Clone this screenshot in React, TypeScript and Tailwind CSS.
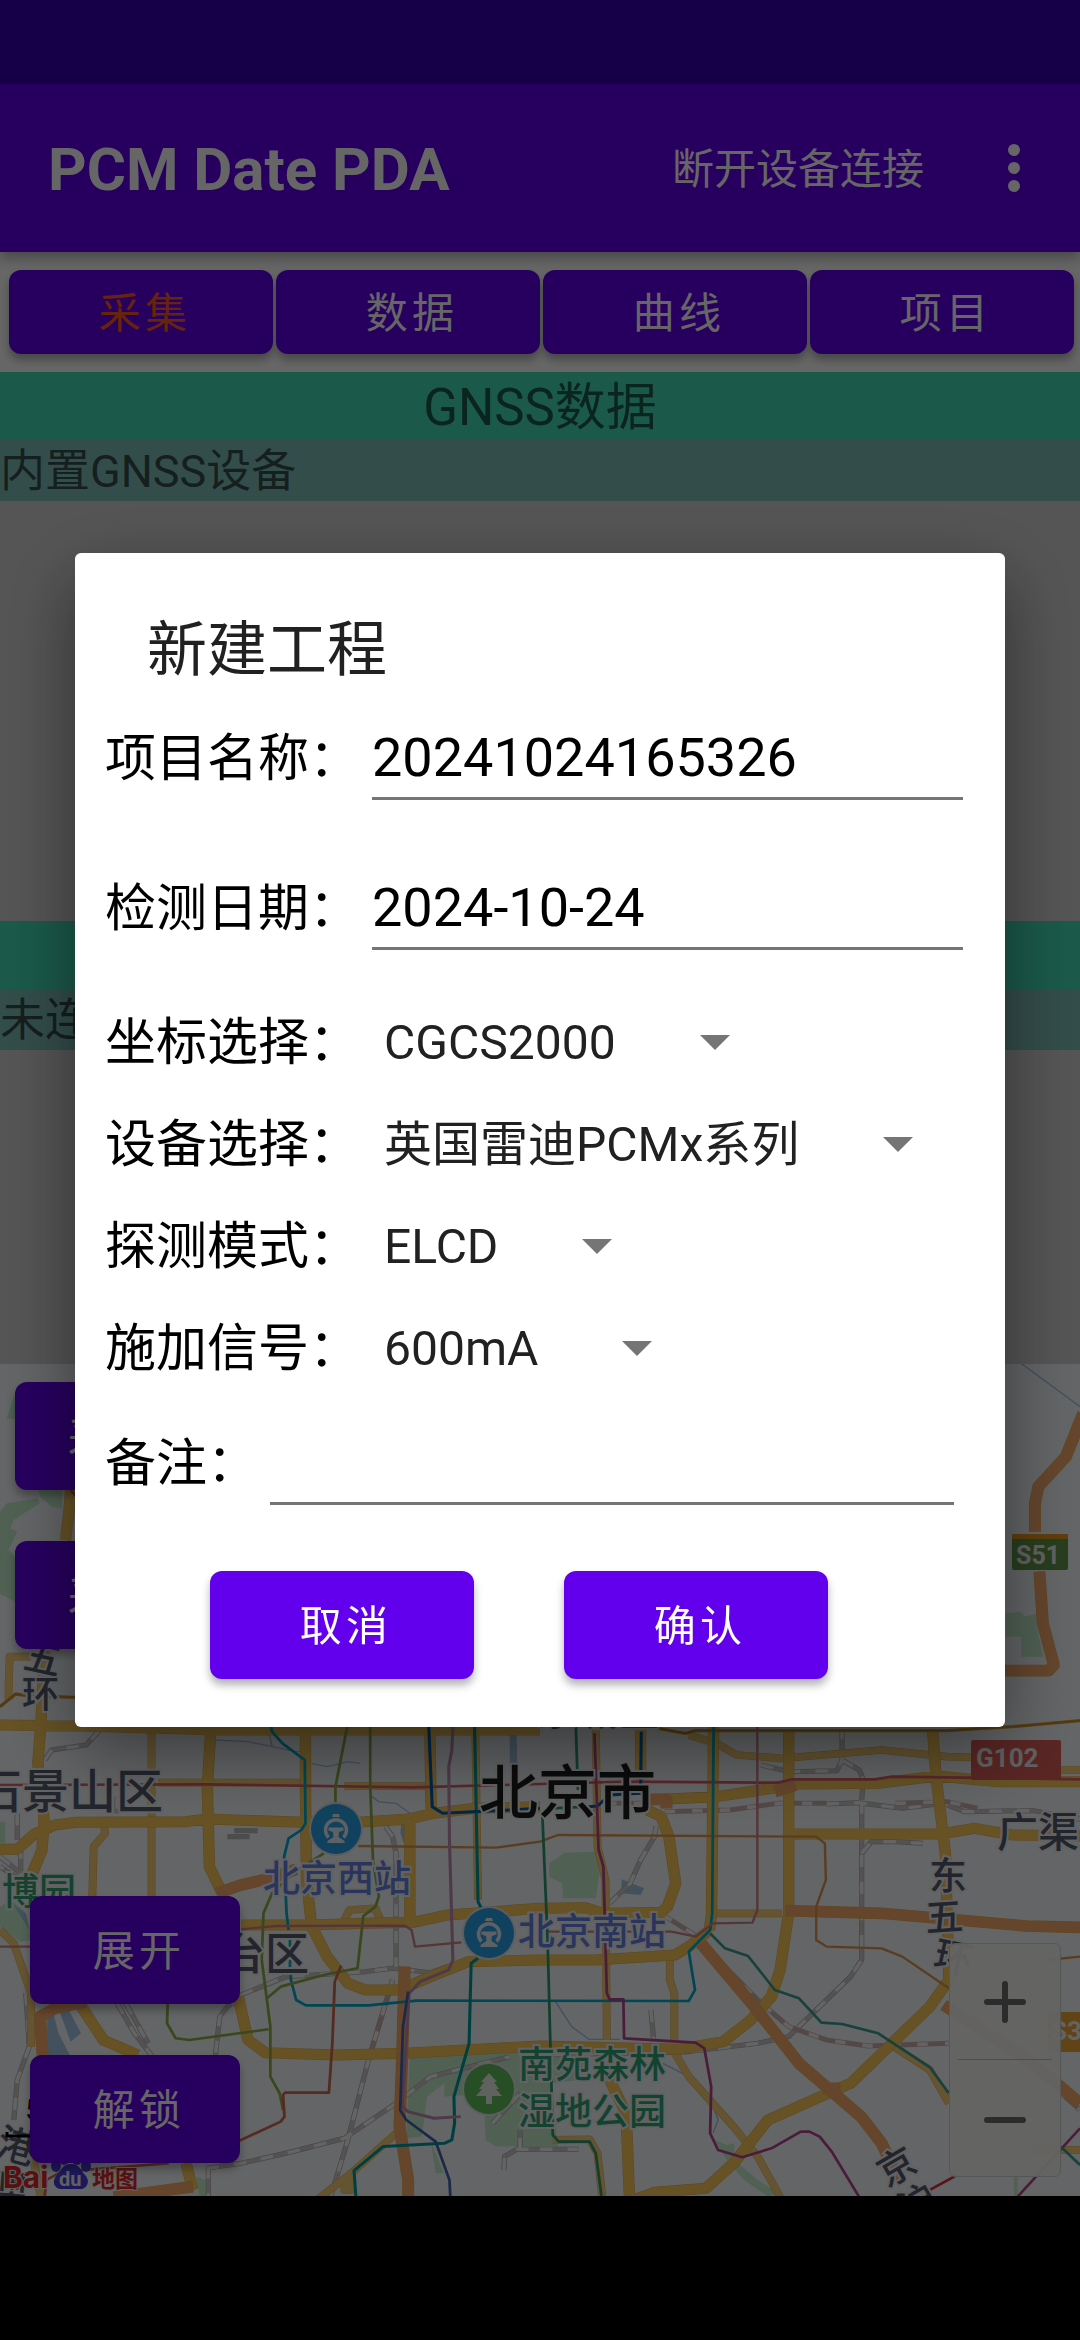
import { type FC, type ReactNode, useState } from 'react';

interface Line {
  color: string;
  width: number;
  d: string[];
}

const PARKS = [
  'M0 -505L20 -530L50 -535L110 -545L115 -530L85 -510L40 -480L30 -455L50 -445L25 -390L45 -370V-235L0 -258Z',
  'M20 -785L40 -850L60 -860V-780Z',
  'M110 -570L120 -545L150 -520L180 -515V-570Z',
  'M0 425H15V490H0Z',
  'M0 680L30 660L70 690L90 780L60 785L0 740Z',
  'M1595 550L1640 518L1730 515L1742 570L1730 655H1635L1632 610L1595 590Z',
  'M1190 1135L1350 1110L1568 1100L1700 1140L1690 1200L1600 1210L1620 1400L1440 1400L1410 1380L1405 1240L1290 1250V1210L1240 1250L1225 1370L1180 1375Z',
  'M1252 1390L1290 1480H1265Z',
  'M570 1490L600 1500V1550H580Z',
  'M2075 1380L2110 1395L2132 1390V1440L2200 1500L2260 1540L2230 1550L2160 1500L2110 1440Z',
  'M2920 -200L2965 -205L2975 -190L3010 -200L3012 -150L3030 -70H2965V-130H2920Z',
  'M2943 1480H2955V1550H2945Z',
];

const WATER = [
  'M137 1010L155 1000L170 1060L205 1130H137Z',
  'M175 1000L200 990L235 1060L205 1085Z',
  'M1480 150H1500L1502 260L1480 270Z',
  'M1805 598L1870 625L1860 645L1805 640Z',
  'M40 675L75 700L88 755Z',
  'M1165 430H1173V490L1163 460Z',
];

const STREAMS = [
  'M2965 -950L3136 -820',
  'M625 180L720 185L860 215L885 215M780 150L790 200',
  'M905 250L950 260L1010 245L1045 250',
  'M1080 350L1100 365L1150 370L1190 400',
  'M1610 960L1660 1040L1710 1078H1800',
  'M1925 1150L2000 1190L2065 1260L2085 1320L2070 1360',
];

const RAILS = [
  'M2210 255L2290 275L2430 272L2445 240V150',
  'M2445 240L2495 270L2507 300L2502 360',
  'M2400 372L2490 368L2620 385L2740 370L2800 395L3000 392L3136 418',
  'M2502 365V840L2470 890L2290 1070L2200 1090L2000 1115L1568 1125',
  'M2502 520L2530 485L2600 485L2680 490',
  'M1905 440L1900 470L1860 540L1830 610L1770 670',
  'M130 240L150 210L250 195L290 150',
  'M0 530L60 580L80 600M60 500V600L0 560',
  'M340 970L390 1060L450 1140',
  'M365 970L430 1090',
  'M700 945L830 890L1060 875L1140 865L1250 878L1300 860',
  'M1120 440L1140 470L1150 520V860',
  'M1140 900L1070 1140L1010 1380L960 1550',
  'M600 1465L700 1450L830 1420L1000 1375L1150 1270',
  'M1175 1250L1250 1190L1480 1130',
  'M75 940L85 1100L50 1200L40 1320',
  'M700 950L660 980L638 1010L625 1130',
  'M605 1460V1560',
  'M50 400V480M340 350V400',
  'M1463 1470L1465 1430L1500 1408H1568',
  'M1430 1330L1510 1240',
  'M1510 1410V1350',
  'M1568 1408H1680',
  'M1890 990L1898 1080',
];

const PINK_RAILS = [
  'M1925 705L2010 760L2200 960L2290 1040L2400 1080L2520 1098L2755 1090',
  'M1140 900L1070 1140',
  'M1760 370H1880M1930 395L2120 390L2260 370H2400M2600 370L2750 365L2840 385',
  'M3070 1230L3136 1290',
];

const ROADS: Line[] = [
  {
    color: '#fbd27c',
    width: 20,
    d: [
      'M440 140V650',
      'M300 420L305 460L272 500L268 650',
      'M25 30L28 -70H90',
      'M1380 140L1388 660',
      'M1730 150L1735 500L1758 600L1762 1080',
      'M1945 830V900L1958 940V1080',
      'M1960 1120L2000 1190L2130 1340L2200 1430L2270 1560',
      'M2000 165L2080 190L2140 225L2270 235L2560 210L2750 230L2840 232M3080 270H3136',
      'M2080 700H2270',
      'M920 1560L1020 1480L1150 1360',
      'M1000 720L1015 690L1090 685L1105 720',
      'M460 308H900M1000 318H1250',
      'M1000 1530V1500L1018 1480V1530Z',
      'M2580 1090L2700 1170L2755 1270',
      'M1605 1380L1712 1378L1735 1420L1750 1560',
      'M25 0V60M0 750L40 790L90 940L90 1100M90 1400L120 1560',
      'M3000 1410H3136',
    ],
  },
  {
    color: '#ffcd5e',
    width: 30,
    d: [
      'M0 135L230 138L470 145L620 150H1568',
      'M130 -90L118 140L110 250L128 420L122 510L90 590',
      'M205 -570L200 -500L190 -420',
      'M0 508H50L100 462L160 435L220 427L540 425L600 417L880 427L1060 425L1180 418L1260 400L1380 385L1568 380',
      'M612 150L602 320L608 560L645 640',
      'M887 140V330L890 600L905 740L950 830L1010 910L1060 930L1160 930L1250 890L1360 845L1568 840H1730L1960 825L2000 800L2060 750',
      'M700 735H900L1060 730L1200 727L1300 705L1568 685L1700 683L1750 700L1920 697L1938 680L1962 610L1942 470L1920 410L1880 390',
      'M1190 410V740',
      'M1248 140L1252 400',
      'M1860 150V300',
      'M2072 140L2066 700L2060 750',
      'M2290 150V700L2265 870L2240 950L2180 1020L2100 1085L1970 1108L1568 1098L1180 1120L980 1125L770 1118L720 1080L692 950',
      'M1920 358L2080 350L2210 330L2310 312L2550 310L2720 288L2900 305L3136 305',
      'M2290 462H2730L2830 445L2940 465L3136 468',
      'M2708 150L2718 290L2745 520L2755 900L2700 980L2470 1210L2230 1320L2130 1450L2050 1525L1900 1537L1840 1560',
      'M230 970L300 1080L400 1125',
      'M1770 1200L1818 1300L1828 1560',
      'M540 1450L560 1530',
    ],
  },
  {
    color: '#c8922e',
    width: 7,
    d: [
      'M0 80L45 42L90 48L225 52',
      'M1910 145L1990 160L2020 152L2500 152L2750 152L2940 140L3136 122',
    ],
  },
  {
    color: '#fcae70',
    width: 32,
    d: [
      'M3145 -800L3095 -670L3015 -580L3005 -530V-445',
      'M3018 -325L3028 -170L3060 -45L3045 -28H2875',
      'M630 640L700 615L790 593L860 568',
      'M1885 358H1935V385M2250 335L2310 315',
      'M2280 692L2560 700L2980 738L3136 742',
      'M2035 790L2190 980L2320 1150L2500 1310L2560 1390L2610 1500',
      'M1175 860L1168 1120L1160 1340L1185 1500V1560',
      'M124 1130L116 1010L160 985L250 965',
      'M330 1552L560 1520',
      'M2390 1225H2440M2740 975L3000 1150L3136 1270',
    ],
  },
];

const METRO: Line[] = [
  {
    color: '#e6606a',
    width: 8,
    d: ['M0 315L600 313L1200 322L1568 312L1818 305L2260 308L2300 298L2540 298L2590 290L3136 298', 'M205 -570L240 -530'],
  },
  {
    color: '#e09a50',
    width: 7,
    d: ['M1040 498L1440 503L1568 485L1620 465L2370 470L2395 490L2398 600L2370 680V780L2400 800L2560 805L2620 830L2755 925M3040 840L3136 830'],
  },
  {
    color: '#00b0d0',
    width: 8,
    d: [
      'M787 140L790 155L820 190L885 240L887 430L875 450L838 475L825 530L832 700L838 750',
      'M842 770V860L845 900L860 960L888 976H1070L1210 962L2000 963L2018 930L2000 815L2062 750L2068 700L2072 140',
    ],
  },
  {
    color: '#009fa0',
    width: 9,
    d: ['M1378 140L1388 665L1400 690', 'M1388 835L1368 850L1362 1090L1318 1250L1320 1330L1312 1380L1290 1390L1112 1400L1028 1472L1034 1560'],
  },
  {
    color: '#0060b8',
    width: 9,
    d: ['M1245 140L1255 380L1285 400L1480 390L1568 385', 'M1710 380L1735 378L1770 345L1860 340L1862 155'],
  },
  {
    color: '#8fb24a',
    width: 8,
    d: [
      'M1008 140L974 320V370',
      'M940 520L850 580L790 640L765 700L760 840L785 1040V1190L812 1240L822 1290',
      'M1075 140V320L1083 540L1100 650L1090 680L1055 708L1038 865L940 885L815 920L775 955',
      'M487 970L485 1030L510 1075L550 1080L780 1048',
    ],
  },
  {
    color: '#c490b4',
    width: 9,
    d: ['M1315 140L1312 210L1303 260L1305 480L1315 840L1303 870L1220 905L1188 940L1168 1280L1185 1295L1260 1315L1338 1310'],
  },
  {
    color: '#d4848c',
    width: 7,
    d: ['M700 748L800 738L1175 737L1195 750L1205 800L1340 787', 'M2199 140V690L2185 728L2070 730L2020 770L1950 755L1590 755', 'M0 800H90'],
  },
  {
    color: '#b84890',
    width: 8,
    d: [
      'M1726 160L1738 510L1752 560L1762 940L1770 958H1810L1812 1075L2020 1088L2045 1105L2065 1220L2062 1360L2085 1410L2155 1432L2240 1405L2325 1355H2350L2380 1370L2415 1415L2500 1560',
      'M2955 1550L3136 1345',
    ],
  },
  {
    color: '#2f9c78',
    width: 8,
    d: ['M1672 140L1678 330M1600 385L1710 380', 'M1575 410L1590 780L1605 1365L1622 1385H1712L1730 1420L1748 1560'],
  },
  {
    color: '#40a294',
    width: 8,
    d: ['M2062 760L2105 805L2172 828L2250 930L2320 955L2385 1028L2445 1032L2550 1060L2700 1162L2755 1240', 'M3080 1400L3136 1455'],
  },
  {
    color: '#d06c50',
    width: 8,
    d: ['M990 857L972 905L965 1090L955 1238H828L822 1245L826 1310L815 1325L690 1385', 'M130 1550L135 1500L180 1475L490 1450'],
  },
  { color: '#4468b0', width: 8, d: ['M1185 935L1170 1040L1162 1290L1180 1320L1265 1385L1305 1500L1308 1560'] },
  { color: '#e03038', width: 8, d: ['M2700 1530L2780 1485'] },
];

interface Place {
  text: string;
  x: number;
  y: number;
  size: number;
  color: string;
  rotate?: number;
}

const DISTRICT = '#565d70';
const STATION = '#6684e8';
const GARDEN = '#30a878';

const PLACES: Place[] = [
  { text: '石景山区', x: -25, y: 1808, size: 47, color: DISTRICT },
  { text: '东城区', x: 536, y: 1725, size: 41, color: DISTRICT },
  { text: '丰台区', x: 177, y: 1970, size: 44, color: DISTRICT },
  { text: '北京西站', x: 263, y: 1892, size: 37, color: STATION },
  { text: '北京南站', x: 518, y: 1945, size: 37, color: STATION },
  { text: '博园', x: 2, y: 1905, size: 37, color: GARDEN },
  { text: '南苑森林', x: 518, y: 2078, size: 37, color: GARDEN },
  { text: '湿地公园', x: 518, y: 2125, size: 37, color: GARDEN },
  { text: '广渠', x: 997, y: 1847, size: 41, color: DISTRICT },
  { text: '东', x: 929, y: 1889, size: 38, color: DISTRICT },
  { text: '五', x: 926, y: 1932, size: 38, color: DISTRICT, rotate: -4 },
  { text: '环', x: 932, y: 1967, size: 38, color: DISTRICT, rotate: 12 },
  { text: '五', x: 22, y: 1668, size: 37, color: DISTRICT, rotate: 12 },
  { text: '环', x: 22, y: 1708, size: 37, color: DISTRICT },
  { text: '京', x: 887, y: 2188, size: 38, color: DISTRICT, rotate: -30 },
  { text: '沪', x: 908, y: 2224, size: 38, color: DISTRICT, rotate: -30 },
  { text: '港', x: -6, y: 2155, size: 40, color: DISTRICT, rotate: 15 },
  { text: '澳', x: -14, y: 2200, size: 40, color: DISTRICT, rotate: 5 },
];

const StationMark: FC<{ x: number; y: number }> = ({ x, y }) => (
  <g transform={`translate(${x} ${y})`}>
    <circle r="27" fill="#e4e8ec" />
    <circle r="25" fill="#2aa4ea" />
    <g fill="#e8f2fa">
      <path d="M-3 -15H3L4 -12H-4Z" />
      <path d="M-7.500 -1.500H7.500V1.500L3 3L2.500 8L8.500 12V14H-8.500V12L-2.500 8L-3 3L-7.500 1.500Z" />
    </g>
    <path d="M-7.500 8.500A10.500 10.500 0 1 1 7.500 8.500" fill="none" stroke="#e8f2fa" strokeWidth="3.500" />
  </g>
);

const CityMap: FC = () => (
  <svg
    className="absolute inset-0 h-full w-full bg-[#f9fcff]"
    viewBox="0 1364 1080 832"
    preserveAspectRatio="xMidYMid slice"
    role="img"
    aria-label="北京市地图"
  >
    <g transform="translate(0 1680) scale(0.3444 0.3333)" fill="none" strokeLinejoin="round">
      <path d={PARKS.join('')} fill="#c8f2d0" />
      <path d={WATER.join('')} fill="#a8c8e8" />
      <path d={STREAMS.join('')} stroke="#a8c8e8" strokeWidth="4" />
      <path d={RAILS.join('')} stroke="#a8a8a8" strokeWidth="15" />
      <path d={RAILS.join('')} stroke="#d0cdca" strokeWidth="12" />
      <path d={RAILS.join('')} stroke="#f9f9f9" strokeWidth="10" strokeDasharray="36 44" />
      <path d={PINK_RAILS.join('')} stroke="#d0b4b4" strokeWidth="15" />
      <path d={PINK_RAILS.join('')} stroke="#f9f4f4" strokeWidth="11" strokeDasharray="30 50" />
      {ROADS.map((road) => (
        <g key={road.color}>
          <path d={road.d.join('')} stroke="#eab04a" strokeWidth={road.width + 3} />
          <path d={road.d.join('')} stroke={road.color} strokeWidth={road.width} />
        </g>
      ))}
      {METRO.map((line) => (
        <path key={line.color} d={line.d.join('')} stroke={line.color} strokeWidth={line.width} />
      ))}
      <path d="M660 470H725M680 452H748" stroke="#bdbdbd" strokeWidth="16" />
    </g>

    <rect x="1012" y="1534" width="56" height="36" rx="2" fill="#649b4c" />
    <rect x="1012" y="1534" width="56" height="5" fill="#f09c20" />
    <rect x="971" y="1740" width="90" height="40" rx="2" fill="#e0605c" />
    <rect x="1048" y="2012" width="40" height="40" rx="2" fill="#f0a838" />
    <g className="font-['Roboto',sans-serif] font-bold" fill="#f4f4f4">
      <text x="1016" y="1564" fontSize="25">S51</text>
      <text x="976" y="1767" fontSize="26">G102</text>
      <text x="1051" y="2040" fontSize="26">S32</text>
    </g>

    <g className="font-['Noto_Sans_CJK_SC',sans-serif] font-medium">
      {PLACES.map((p) => (
        <text
          key={`${p.text}${p.x}`}
          x={p.x}
          y={p.y}
          fontSize={p.size}
          fill={p.color}
          stroke="#f4f6f8"
          strokeWidth="4"
          paintOrder="stroke"
          transform={p.rotate ? `rotate(${p.rotate} ${p.x} ${p.y})` : undefined}
        >
          {p.text}
        </text>
      ))}
      <text x="479" y="1814" fontSize="59" fill="#1c1c1c" stroke="#f4f6f8" strokeWidth="4" paintOrder="stroke">
        北京市
      </text>
    </g>

    <StationMark x={336} y={1829} />
    <StationMark x={489} y={1933} />
    <g transform="translate(489 2089)">
      <circle r="27" fill="#e4e8ec" />
      <circle r="25" fill="#64c45c" />
      <path d="M0 -16L8 -7H5L10 0H7L13 7H3V15H-3V7H-13L-7 0H-10L-5 -7H-8Z" fill="#f0f4ee" />
    </g>

    {/* scale bar */}
    <path d="M7 2132V2136H110V2132" fill="none" stroke="#000" strokeWidth="3" />
    <text x="25" y="2120" fontSize="30" className="font-['Roboto','Noto_Sans_CJK_SC',sans-serif]">
      5公里
    </text>

    {/* provider mark */}
    <g fill="#e02a2a" stroke="#f4f6f8" strokeWidth="2" paintOrder="stroke">
      <text x="3" y="2188" fontSize="30" className="font-['Inter',sans-serif] font-bold">
        Bai
      </text>
      <text x="92" y="2187" fontSize="23" className="font-['Noto_Sans_CJK_SC',sans-serif] font-bold">
        地图
      </text>
    </g>
    <g fill="#4a3ee0">
      <path d="M71 2164C80 2164 81 2171 85 2175C91 2181 87 2190 79 2189H63C54 2190 51 2181 57 2175C61 2171 62 2164 71 2164Z" />
      <ellipse cx="56" cy="2166" rx="5" ry="6" />
      <ellipse cx="64" cy="2159" rx="5" ry="6" />
      <ellipse cx="77" cy="2159" rx="5" ry="6" />
      <ellipse cx="86" cy="2166" rx="5" ry="6" />
      <text x="59" y="2186" fontSize="20" fill="#f0f0f8" className="font-['Roboto',sans-serif] font-bold">
        du
      </text>
    </g>
  </svg>
);

const FilledButton: FC<{ className: string; onClick?: () => void; children: ReactNode }> = ({
  className,
  onClick,
  children,
}) => (
  <button
    type="button"
    onClick={onClick}
    className={`rounded-xl bg-[#6200ee] pt-1 pl-2 text-[42px] leading-none tracking-widest shadow-[0_6px_9px_rgba(0,0,0,0.3)] ${className}`}
  >
    {children}
  </button>
);

const DataSection: FC<{ title: string; status: string; className: string }> = ({ title, status, className }) => (
  <section className={`bg-[#d5d5d5] text-black/60 ${className}`}>
    <h2 className="h-[68px] bg-[#44e1bb] text-center text-[51px] leading-[72px]">{title}</h2>
    <p className="h-[61px] bg-[#7fc1bb] text-[45px] leading-[64px]">{status}</p>
  </section>
);

const SelectRow: FC<{ id: string; label: string; options: string[] }> = ({ id, label, options }) => {
  const [value, setValue] = useState(options[0]);

  return (
    <div className="flex h-[102px] items-center">
      <label htmlFor={id} className="text-[51px] leading-[60px]">
        {label}
      </label>
      <div className="relative ml-6">
        <select
          id={id}
          value={value}
          onChange={(e) => setValue(e.target.value)}
          className="field-sizing-content block h-[72px] appearance-none bg-transparent pr-[114px] text-[48px] leading-[72px] text-[#212121] outline-none"
        >
          {options.map((option) => (
            <option key={option}>{option}</option>
          ))}
        </select>
        <svg className="pointer-events-none absolute top-7 right-0 h-[15px] w-[30px]" viewBox="0 0 30 15" aria-hidden="true">
          <path d="M0 0H30L15 15Z" fill="#757575" />
        </svg>
      </div>
    </div>
  );
};

const INPUT_CLASS =
  'ml-3 h-[86px] min-w-0 flex-1 border-b-[3px] border-[#757575] bg-transparent pt-1 text-[54px] outline-none';

const TABS = ['采集', '数据', '曲线', '项目'];

const App: FC = () => {
  const [tab, setTab] = useState('采集');
  const [open, setOpen] = useState(true);
  const [name, setName] = useState('20241024165326');
  const [date, setDate] = useState('2024-10-24');
  const [note, setNote] = useState('');

  return (
    <div className="flex min-h-screen flex-col bg-white font-['Roboto','Noto_Sans_CJK_SC',sans-serif]">
      <div className="h-[84px] bg-[#3700b3]" />
      <header className="relative flex h-[168px] items-center bg-[#6200ee] pr-9 pl-12 text-white shadow-[0_6px_12px_rgba(0,0,0,0.3)]">
        <h1 className="flex-1 pt-1 text-[60px] leading-[70px] font-bold">PCM Date PDA</h1>
        <button type="button" className="pt-1 text-[42px] leading-[60px]">
          断开设备连接
        </button>
        <button type="button" aria-label="更多" className="ml-[60px] flex w-[60px] justify-center">
          <svg className="h-12 w-3" viewBox="0 0 12 48" fill="currentColor">
            <circle cx="6" cy="6" r="6" />
            <circle cx="6" cy="24" r="6" />
            <circle cx="6" cy="42" r="6" />
          </svg>
        </button>
      </header>

      <nav className="grid grid-cols-4 gap-[3px] py-[18px] pr-[6px] pl-[9px]">
        {TABS.map((t) => (
          <FilledButton key={t} onClick={() => setTab(t)} className={t === tab ? 'h-[84px] text-[#ff5722]' : 'h-[84px] text-white'}>
            {t}
          </FilledButton>
        ))}
      </nav>

      <DataSection title="GNSS数据" status="内置GNSS设备" className="h-[549px]" />
      <DataSection title="PCM数据" status="未连接设备" className="h-[443px]" />

      <main className="relative min-h-[832px] flex-1 overflow-hidden text-white">
        <CityMap />
        <div className="absolute top-[18px] left-[15px] flex flex-col gap-[51px]">
          <FilledButton className="h-[108px] w-[190px]">采集</FilledButton>
          <FilledButton className="h-[108px] w-[190px]">采样</FilledButton>
        </div>
        <div className="absolute bottom-[33px] left-[30px] flex flex-col gap-[51px]">
          <FilledButton className="h-[108px] w-[210px]">展开</FilledButton>
          <FilledButton className="h-[108px] w-[210px]">解锁</FilledButton>
        </div>
        <div className="absolute right-[19px] bottom-[19px] flex w-[112px] flex-col rounded-md border border-[#d8d8d8] bg-[#fbf9f7]/95 px-2 text-[#6e6e6e]">
          <button type="button" aria-label="放大" className="flex h-[116px] items-center justify-center border-b border-[#c4c4c4]">
            <svg className="h-[42px] w-[42px]" viewBox="0 0 42 42" stroke="currentColor" strokeWidth="6" strokeLinecap="round">
              <path d="M3 21H39M21 3V39" />
            </svg>
          </button>
          <button type="button" aria-label="缩小" className="flex h-[116px] items-center justify-center pt-1">
            <svg className="h-[42px] w-[42px]" viewBox="0 0 42 42" stroke="currentColor" strokeWidth="6" strokeLinecap="round">
              <path d="M3 21H39" />
            </svg>
          </button>
        </div>
      </main>
      <div className="h-36 bg-black" />

      {open && (
        <div className="fixed inset-0 flex items-center justify-center bg-black/60 px-[75px] pt-[84px] pb-36">
          <section
            role="dialog"
            aria-modal="true"
            aria-labelledby="dialog-title"
            className="w-full rounded-md bg-white pt-[63px] pb-12 pl-[30px] text-black shadow-[0_24px_72px_rgba(0,0,0,0.45)]"
          >
            <h2 id="dialog-title" className="pl-[42px] text-[60px] leading-[70px] text-[#212121]">
              新建工程
            </h2>
            <div className="-mt-1 flex h-[150px] items-center pr-[42px]">
              <label htmlFor="name" className="pt-1 text-[51px] leading-[60px]">
                项目名称：
              </label>
              <input id="name" value={name} onChange={(e) => setName(e.target.value)} className={INPUT_CLASS} />
            </div>
            <div className="flex h-[150px] items-center pr-[42px]">
              <label htmlFor="date" className="pt-1 text-[51px] leading-[60px]">
                检测日期：
              </label>
              <input id="date" value={date} onChange={(e) => setDate(e.target.value)} className={INPUT_CLASS} />
            </div>
            <div className="mt-2.5 -mb-0.5">
              <SelectRow id="coord" label="坐标选择：" options={['CGCS2000', 'WGS84']} />
              <SelectRow id="device" label="设备选择：" options={['英国雷迪PCMx系列']} />
              <SelectRow id="mode" label="探测模式：" options={['ELCD', 'LF']} />
              <SelectRow id="signal" label="施加信号：" options={['600mA', '300mA', '1A']} />
            </div>
            <div className="flex h-32 items-center pr-[51px]">
              <label htmlFor="note" className="pt-1 text-[51px] leading-[60px]">
                备注：
              </label>
              <input id="note" value={note} onChange={(e) => setNote(e.target.value)} className={INPUT_CLASS} />
            </div>
            <div className="mt-[45px] flex gap-[90px] pl-[105px] text-white">
              <FilledButton className="h-[108px] w-[264px]" onClick={() => setOpen(false)}>
                取消
              </FilledButton>
              <FilledButton className="h-[108px] w-[264px]" onClick={() => setOpen(false)}>
                确认
              </FilledButton>
            </div>
          </section>
        </div>
      )}
    </div>
  );
};

export default App;
